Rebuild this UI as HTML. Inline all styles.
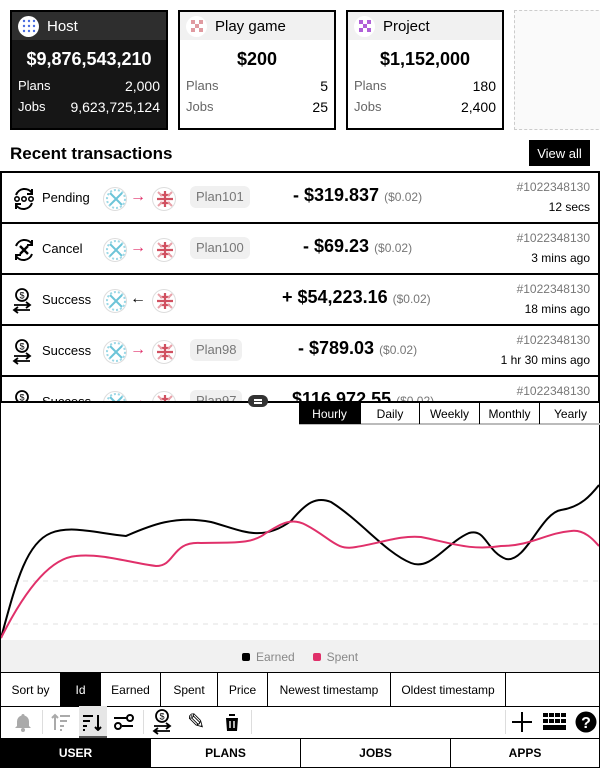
<!DOCTYPE html>
<html><head><meta charset="utf-8">
<style>
*{box-sizing:border-box;margin:0;padding:0}
body{width:600px;height:768px;overflow:hidden;background:#fff;font-family:"Liberation Sans",Arial,sans-serif;color:#000;position:relative}
.card{position:absolute;top:10px;width:158px;height:120px;border:2px solid #000;background:#fff}
.card .hd{height:28px;background:#f1f1f1;display:flex;align-items:center;padding-left:6px;font-size:15px}
.card .av{width:21px;height:21px;border-radius:50%;background:#fff;margin-right:8px;display:flex;align-items:center;justify-content:center}
.card .amt{text-align:center;font-weight:bold;font-size:18px;margin-top:9px}
.card .row{display:flex;justify-content:space-between;padding:0 6px;font-size:14px;margin-top:5px}
.card .row span:first-child{color:#666;font-size:13px}
.dark{background:#161616;color:#fff}
.dark .hd{background:#2e2e2e;color:#fff}
.dark .row span:first-child{color:#fff}
.dash{position:absolute;left:514px;top:10px;width:100px;height:120px;border:1px dashed #ccc;background:#fafafa}
h2{position:absolute;left:10px;top:144px;font-size:17px;font-weight:bold}
.va{position:absolute;left:529px;top:140px;width:61px;height:26px;background:#000;color:#fff;font-size:13px;display:flex;align-items:center;justify-content:center}
.tx{position:absolute;left:0;width:600px;height:52px;border:2px solid #000;border-bottom:none;background:#fff}
.tx .ic{position:absolute;left:10px;top:13px}
.tx .st{position:absolute;left:40px;top:17px;font-size:13px}
.tx .a1{position:absolute;left:101px;top:14px}
.tx .ar{position:absolute;left:128px;top:15px;font-size:16px;color:#e0306a}
.tx .a2{position:absolute;left:150px;top:14px}
.tx .pl{position:absolute;left:188px;top:13px;height:22px;padding:0 6px;background:#f0f0f0;border-radius:6px;color:#777;font-size:13px;line-height:22px}
.tx .amt{position:absolute;top:12px;font-size:18px;font-weight:bold}
.tx .amt small{font-size:12px;color:#777;font-weight:normal}
.tx .id{position:absolute;right:8px;top:7px;font-size:12px;color:#777}
.tx .tm{position:absolute;right:8px;top:27px;font-size:12px}
.av2{width:24px;height:24px;border-radius:50%;border:1px solid #ddd;background:#fff;display:flex;align-items:center;justify-content:center}
.chart{position:absolute;left:0;top:401px;width:600px;height:271px;border:1px solid #000;border-top:2px solid #000;background:#fff}
.tabs{position:absolute;left:298px;top:0;display:flex;height:22px;border-bottom:2px solid #bbb}
.tabs div{height:21px;border-right:1px solid #000;font-size:12px;display:flex;align-items:center;justify-content:center}
.leg{position:absolute;left:0;top:237px;width:598px;height:33px;background:#f1f1f1;font-size:12px;color:#888;display:flex;justify-content:center;align-items:center;gap:18px}
.leg i{display:inline-block;width:8px;height:8px;border-radius:2px;margin-right:6px}
.sort{position:absolute;left:0;top:672px;width:600px;height:35px;border:1px solid #000;display:flex;font-size:12px}
.sort div{display:flex;align-items:center;justify-content:center;border-right:1px solid #000;height:100%}
.tool{position:absolute;left:0;top:706px;width:600px;height:32px;border-left:1px solid #000;border-right:1px solid #000}
.nav{position:absolute;left:0;top:738px;width:600px;height:30px;display:flex;font-size:12px;font-weight:bold}
.nav div{width:150px;display:flex;align-items:center;justify-content:center;border:1px solid #000;border-left:none}
</style></head><body>

<div class="card dark" style="left:10px">
 <div class="hd"><div class="av"><svg width="14" height="14"><g fill="#4a6de0"><circle cx="2" cy="2" r="1.2"/><circle cx="7" cy="2" r="1.2"/><circle cx="12" cy="2" r="1.2"/><circle cx="2" cy="7" r="1.2"/><circle cx="7" cy="7" r="1.2"/><circle cx="12" cy="7" r="1.2"/><circle cx="2" cy="12" r="1.2"/><circle cx="7" cy="12" r="1.2"/><circle cx="12" cy="12" r="1.2"/></g></svg></div>Host</div>
 <div class="amt">$9,876,543,210</div>
 <div class="row" style="margin-top:8px"><span>Plans</span><span>2,000</span></div>
 <div class="row"><span>Jobs</span><span>9,623,725,124</span></div>
</div>
<div class="card" style="left:178px">
 <div class="hd"><div class="av"><svg width="14" height="14"><g fill="#e09aa0"><rect x="1" y="1" width="4" height="4"/><rect x="9" y="1" width="4" height="4"/><rect x="5" y="5" width="4" height="4"/><rect x="1" y="9" width="4" height="4"/><rect x="9" y="9" width="4" height="4"/></g></svg></div>Play game</div>
 <div class="amt">$200</div>
 <div class="row" style="margin-top:8px"><span>Plans</span><span>5</span></div>
 <div class="row"><span>Jobs</span><span>25</span></div>
</div>
<div class="card" style="left:346px">
 <div class="hd"><div class="av"><svg width="14" height="14"><g fill="#b060d8"><rect x="1" y="1" width="4" height="4"/><rect x="9" y="1" width="4" height="4"/><rect x="5" y="5" width="4" height="4"/><rect x="1" y="9" width="4" height="4"/><rect x="9" y="9" width="4" height="4"/></g></svg></div>Project</div>
 <div class="amt">$1,152,000</div>
 <div class="row" style="margin-top:8px"><span>Plans</span><span>180</span></div>
 <div class="row"><span>Jobs</span><span>2,400</span></div>
</div>
<div class="dash"></div>

<h2>Recent transactions</h2>
<div class="va">View all</div>

<svg width="0" height="0" style="position:absolute"><defs>
<g id="a1"><circle cx="12" cy="12" r="9" fill="none" stroke="#9bd8e6" stroke-width="2" stroke-dasharray="2 2"/><path d="M6 6L18 18M18 6L6 18" stroke="#6cc4d8" stroke-width="2"/></g>
<g id="a2"><path d="M12 4V20M4 12H20M7 8H17M7 16H17" stroke="#d05060" stroke-width="2.2"/><path d="M5 5L9 9M19 5L15 9M5 19L9 15M19 19L15 15" stroke="#e8a0a8" stroke-width="2"/></g>
<g id="coin"><circle cx="10" cy="7" r="6" fill="none" stroke="#000" stroke-width="1.8"/><text x="10" y="10.5" font-size="9" text-anchor="middle" font-family="Liberation Sans">$</text><path d="M2 17H18M14 14l4 3-4 3M18 22H2M6 19l-4 3 4 3" stroke="#000" stroke-width="1.8" fill="none"/></g>
</defs></svg>

<div class="tx" style="top:171px">
 <svg class="ic" width="24" height="26"><path d="M4 9A9 9 0 0 1 20 7M20 17A9 9 0 0 1 4 19" stroke="#000" stroke-width="2" fill="none"/><path d="M20 3v5h-5M4 23v-5h5" stroke="#000" stroke-width="2" fill="none"/><circle cx="5" cy="13" r="2.2" fill="none" stroke="#000" stroke-width="1.6"/><circle cx="12" cy="13" r="2.2" fill="none" stroke="#000" stroke-width="1.6"/><circle cx="19" cy="13" r="2.2" fill="none" stroke="#000" stroke-width="1.6"/></svg>
 <div class="st">Pending</div>
 <div class="a1 av2"><svg width="24" height="24"><use href="#a1"/></svg></div><div class="ar">→</div><div class="a2 av2"><svg width="24" height="24"><use href="#a2"/></svg></div>
 <div class="pl">Plan101</div>
 <div class="amt" style="left:291px">- $319.837 <small>($0.02)</small></div>
 <div class="id">#1022348130</div><div class="tm">12 secs</div>
</div>
<div class="tx" style="top:222px">
 <svg class="ic" width="24" height="26"><path d="M4 9A9 9 0 0 1 20 7M20 17A9 9 0 0 1 4 19" stroke="#000" stroke-width="2" fill="none"/><path d="M20 3v5h-5M4 23v-5h5" stroke="#000" stroke-width="2" fill="none"/><path d="M8 9l8 8M16 9l-8 8" stroke="#000" stroke-width="2.4"/></svg>
 <div class="st">Cancel</div>
 <div class="a1 av2"><svg width="24" height="24"><use href="#a1"/></svg></div><div class="ar">→</div><div class="a2 av2"><svg width="24" height="24"><use href="#a2"/></svg></div>
 <div class="pl">Plan100</div>
 <div class="amt" style="left:301px">- $69.23 <small>($0.02)</small></div>
 <div class="id">#1022348130</div><div class="tm">3 mins ago</div>
</div>
<div class="tx" style="top:273px">
 <svg class="ic" width="24" height="28"><use href="#coin"/></svg>
 <div class="st">Success</div>
 <div class="a1 av2"><svg width="24" height="24"><use href="#a1"/></svg></div><div class="ar" style="color:#000">←</div><div class="a2 av2"><svg width="24" height="24"><use href="#a2"/></svg></div>
 <div class="amt" style="left:280px">+ $54,223.16 <small>($0.02)</small></div>
 <div class="id">#1022348130</div><div class="tm">18 mins ago</div>
</div>
<div class="tx" style="top:324px">
 <svg class="ic" width="24" height="28"><use href="#coin"/></svg>
 <div class="st">Success</div>
 <div class="a1 av2"><svg width="24" height="24"><use href="#a1"/></svg></div><div class="ar">→</div><div class="a2 av2"><svg width="24" height="24"><use href="#a2"/></svg></div>
 <div class="pl">Plan98</div>
 <div class="amt" style="left:296px">- $789.03 <small>($0.02)</small></div>
 <div class="id">#1022348130</div><div class="tm">1 hr 30 mins ago</div>
</div>
<div class="tx" style="top:375px">
 <svg class="ic" width="24" height="28"><use href="#coin"/></svg>
 <div class="st">Success</div>
 <div class="a1 av2"><svg width="24" height="24"><use href="#a1"/></svg></div><div class="ar">→</div><div class="a2 av2"><svg width="24" height="24"><use href="#a2"/></svg></div>
 <div class="pl">Plan97</div>
 <div class="amt" style="left:290px">$116,972.55 <small>($0.02)</small></div>
 <div class="id">#1022348130</div>
</div>

<div class="chart">
 <div class="tabs">
  <div style="width:62px;background:#000;color:#fff">Hourly</div>
  <div style="width:59px">Daily</div>
  <div style="width:60px">Weekly</div>
  <div style="width:60px">Monthly</div>
  <div style="width:61px;border-right:none">Yearly</div>
 </div>
 <svg style="position:absolute;left:0;top:0" width="598" height="240">
  <path d="M12 178H598M12 221H598" stroke="#e2e2e2" stroke-dasharray="5 5"/>
  <path d="M0 235 C15 180,25 140,50 130 C70 122,95 130,125 133 C150 122,175 112,210 119 C240 127,260 140,290 118 C305 100,315 93,330 99 C360 118,385 150,410 160 C430 168,445 140,468 130 C485 125,485 148,505 156 C525 160,540 110,560 107 C580 104,590 92,598 82" stroke="#000" stroke-width="2" fill="none"/>
  <path d="M0 235 C25 185,50 155,75 153 C100 150,130 160,155 163 C175 163,170 138,200 140 C230 139,250 142,265 130 C280 121,290 114,305 122 C330 135,335 148,355 144 C380 140,400 132,420 134 C450 140,470 148,500 143 C530 143,545 130,570 128 C585 126,595 140,598 143" stroke="#e0306a" stroke-width="2" fill="none"/>
 </svg>
 <div class="leg"><span><i style="background:#000"></i>Earned</span><span><i style="background:#e0306a"></i>Spent</span></div>
</div>
<div style="position:absolute;left:248px;top:395px;width:20px;height:12px;border-radius:6px;background:#333"><div style="position:absolute;left:6px;top:4px;width:8px;height:1.5px;background:#fff"></div><div style="position:absolute;left:6px;top:7px;width:8px;height:1.5px;background:#fff"></div></div>

<div class="sort">
 <div style="width:60px">Sort by</div>
 <div style="width:40px;background:#000;color:#fff">Id</div>
 <div style="width:60px">Earned</div>
 <div style="width:57px">Spent</div>
 <div style="width:50px">Price</div>
 <div style="width:123px">Newest timestamp</div>
 <div style="width:115px">Oldest timestamp</div>
</div>

<div class="tool">
 <svg style="position:absolute;left:12px;top:6px" width="20" height="20"><path d="M10 2a1.5 1.5 0 0 1 1.5 1.5A6 6 0 0 1 16 9.5V14l2 2H2l2-2V9.5A6 6 0 0 1 8.5 3.5 1.5 1.5 0 0 1 10 2z" fill="#aaa"/><circle cx="10" cy="18" r="2" fill="#aaa"/></svg>
 <div style="position:absolute;left:41px;top:4px;width:1px;height:24px;background:#ddd"></div>
 <svg style="position:absolute;left:50px;top:7px" width="20" height="18"><path d="M4 17V2M1 5l3-3 3 3M9 3h10M9 8h7M9 13h4M9 17h2" stroke="#aaa" stroke-width="2" fill="none"/></svg>
 <div style="position:absolute;left:78px;top:0;width:28px;height:32px;background:#e6e6e6;border-bottom:2px solid #555"></div>
 <svg style="position:absolute;left:81px;top:7px" width="22" height="18"><path d="M1 3h10M1 8h7M1 13h4M1 17h2M16 2v15M13 14l3 3 3-3" stroke="#000" stroke-width="2" fill="none"/></svg>
 <svg style="position:absolute;left:112px;top:7px" width="24" height="18"><path d="M1 5h13M20 13H9" stroke="#000" stroke-width="2"/><circle cx="17" cy="5" r="3" fill="none" stroke="#000" stroke-width="2"/><circle cx="5" cy="13" r="3" fill="none" stroke="#000" stroke-width="2"/></svg>
 <div style="position:absolute;left:142px;top:4px;width:1px;height:24px;background:#ddd"></div>
 <svg style="position:absolute;left:151px;top:3px" width="22" height="28"><use href="#coin"/></svg>
 <div style="position:absolute;left:186px;top:3px;font-size:22px">✎</div>
 <svg style="position:absolute;left:222px;top:7px" width="18" height="18"><path d="M1 3h16M6 3V1h6v2M3 5h12l-1 13H4z" fill="#000"/><path d="M7 8v7M11 8v7" stroke="#fff" stroke-width="1.4"/></svg>
 <div style="position:absolute;left:250px;top:4px;width:1px;height:24px;background:#ddd"></div>
 <div style="position:absolute;left:504px;top:4px;width:1px;height:24px;background:#ddd"></div>
 <svg style="position:absolute;left:510px;top:5px" width="22" height="22"><path d="M11 1v20M1 11h20" stroke="#000" stroke-width="2"/></svg>
 <svg style="position:absolute;left:542px;top:7px" width="24" height="18"><g fill="#000"><rect x="0" y="0" width="5" height="4"/><rect x="6" y="0" width="5" height="4"/><rect x="12" y="0" width="5" height="4"/><rect x="18" y="0" width="5" height="4"/><rect x="0" y="6" width="5" height="4"/><rect x="6" y="6" width="5" height="4"/><rect x="12" y="6" width="5" height="4"/><rect x="18" y="6" width="5" height="4"/><rect x="0" y="12" width="23" height="5"/></g></svg>
 <svg style="position:absolute;left:574px;top:5px" width="22" height="22"><circle cx="11" cy="11" r="10.5" fill="#000"/><text x="11" y="17" font-size="16" font-weight="bold" fill="#fff" text-anchor="middle" font-family="Liberation Sans">?</text></svg>
</div>

<div class="nav">
 <div style="background:#000;color:#fff;width:151px;border-left:1px solid #000">USER</div>
 <div>PLANS</div>
 <div>JOBS</div>
 <div style="width:149px">APPS</div>
</div>
</body></html>
